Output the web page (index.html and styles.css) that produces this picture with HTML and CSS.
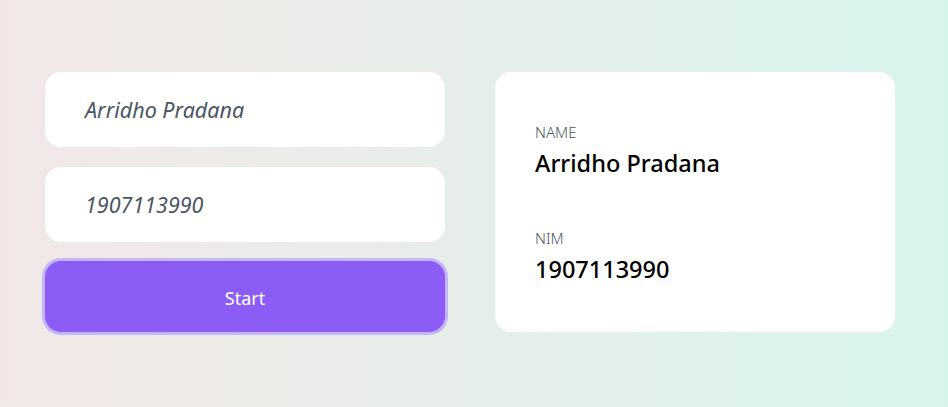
FILE: index.html
```html
<!DOCTYPE html>
<html>
<head>
<meta charset="utf-8">
<link rel="stylesheet" href="styles.css">
</head>
<body>
<div class="page">
  <div class="form">
    <div class="field">Arridho Pradana</div>
    <div class="field">1907113990</div>
    <button class="btn">Start</button>
  </div>
  <div class="card">
    <div class="item">
      <div class="label">NAME</div>
      <div class="value">Arridho Pradana</div>
    </div>
    <div class="item">
      <div class="label">NIM</div>
      <div class="value">1907113990</div>
    </div>
  </div>
</div>
</body>
</html>
```
FILE: styles.css
```css
html, body { margin: 0; height: 100%; }
body {
  font-family: "Noto Sans", "Open Sans", sans-serif;
  background: linear-gradient(90deg, #f2e7e6 0%, #ebebe8 30%, #e2f0eb 65%, #d7f4ec 100%);
}
.page {
  display: flex;
  gap: 50px;
  padding: 72px 0 0 45px;
  align-items: flex-start;
}
.form {
  width: 400px;
  display: flex;
  flex-direction: column;
}
.field {
  height: 75px;
  box-sizing: border-box;
  background: #fff;
  border-radius: 16px;
  padding: 0 40px 0 40px;
  display: flex;
  align-items: center;
  font-style: italic;
  font-size: 21.5px;
  color: #4b5563;
  margin-bottom: 20px;
}
.btn {
  height: 71px;
  margin-top: -1px;
  padding-top: 3px;
  border: none;
  border-radius: 16px;
  background: #8b5cf6;
  color: #fff;
  font-family: inherit;
  font-size: 18px;
  box-shadow: 0 0 0 3px #c4b5fd;
}
.card {
  width: 400px;
  height: 260px;
  box-sizing: border-box;
  background: #fff;
  border-radius: 16px;
  padding: 50px 40px;
  display: flex;
  flex-direction: column;
  gap: 50px;
}
.label {
  font-size: 15px;
  font-weight: 300;
  color: #4b5563;
  line-height: 20px;
}
.value {
  margin-top: 6px;
  font-size: 23.5px;
  font-weight: 500;
  color: #000;
  line-height: 30px;
}
```
